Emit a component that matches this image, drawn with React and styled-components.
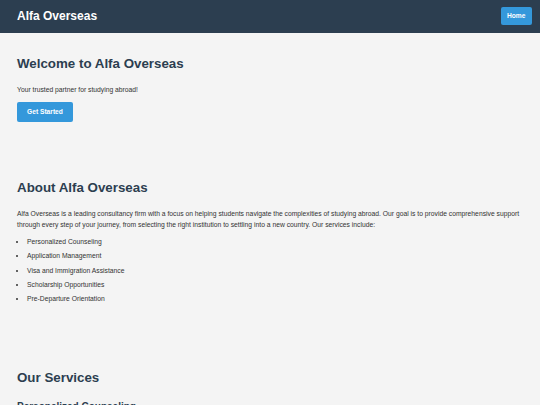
import React from "react";
import styled, { createGlobalStyle } from "styled-components";

const Global = createGlobalStyle`
  html, body { margin: 0; padding: 0; }
  body {
    background: #f4f4f4;
    font-family: "Liberation Sans", Arial, sans-serif;
    font-size: 6.75px;
    line-height: 1.6;
    color: #333;
  }
  * { box-sizing: border-box; }
`;

const Header = styled.header`
  display: flex;
  align-items: center;
  justify-content: space-between;
  background: #2c3e50;
  height: 33px;
  padding: 0 8px 0 17px;
`;

const Logo = styled.div`
  color: #fff;
  font-size: 12px;
  font-weight: bold;
  line-height: 1.6;
  margin-top: 1px;
`;

const Nav = styled.nav`
  display: flex;
  align-items: center;
  margin-top: -1px;
`;

const Button = styled.a`
  display: inline-block;
  background: #3498db;
  color: #fff;
  font-weight: bold;
  font-size: 6.67px;
  line-height: 10.67px;
  border-radius: 2px;
  text-decoration: none;
  padding: ${(p) => (p.$small ? "3.2px 6.5px" : "4.7px 10px")};
`;

const Section = styled.section`
  padding: ${(p) => p.$pad};
`;

const Title = styled.h2`
  margin: 0 0 11.2px;
  font-size: 13.33px;
  line-height: 1.6;
  font-weight: bold;
  color: #2c3e50;
`;

const SubTitle = styled.h3`
  margin: 0;
  font-size: 10px;
  line-height: 1.6;
  font-weight: bold;
  color: #2c3e50;
`;

const Text = styled.p`
  margin: 0 0 ${(p) => p.$mb || "6.5px"};
`;

const List = styled.ul`
  margin: 0 0 5px;
  padding-left: 10px;
`;

const Item = styled.li`
  margin-bottom: 3.4px;
`;

const services = [
  "Personalized Counseling",
  "Application Management",
  "Visa and Immigration Assistance",
  "Scholarship Opportunities",
  "Pre-Departure Orientation",
];

export default function App() {
  return (
    <>
      <Global />
      <Header>
        <Logo>Alfa Overseas</Logo>
        <Nav>
          <Button $small href="#">Home</Button>
        </Nav>
      </Header>
      <Section $pad="19.5px 17px 27px">
        <Title as="h1">Welcome to Alfa Overseas</Title>
        <Text $mb="6.3px">Your trusted partner for studying abroad!</Text>
        <Button href="#">Get Started</Button>
      </Section>
      <Section $pad="27.5px 17px 28.5px">
        <Title>About Alfa Overseas</Title>
        <Text>
          Alfa Overseas is a leading consultancy firm with a focus on helping students navigate the
          complexities of studying abroad. Our goal is to provide comprehensive support through every
          step of your journey, from selecting the right institution to settling into a new country.
          Our services include:
        </Text>
        <List>
          {services.map((s) => (
            <Item key={s}>{s}</Item>
          ))}
        </List>
      </Section>
      <Section $pad="28.5px 17px">
        <Title>Our Services</Title>
        <SubTitle>Personalized Counseling</SubTitle>
      </Section>
    </>
  );
}
